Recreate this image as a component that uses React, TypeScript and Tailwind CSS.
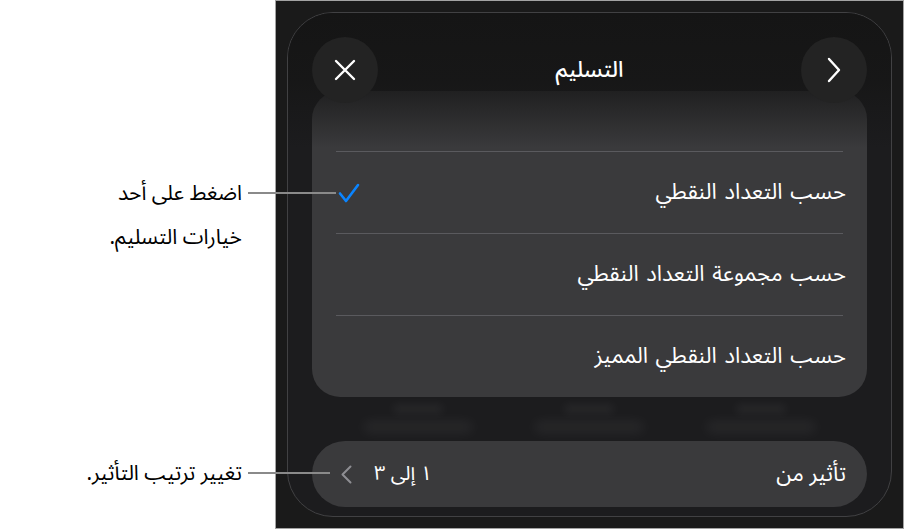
import React from "react";

const font = { fontFamily: '"Noto Sans Arabic", "DejaVu Sans", "Noto Sans", sans-serif' };

function XIcon() {
  return (
    <svg width="24" height="24" viewBox="0 0 24 24" fill="none" stroke="white" strokeWidth="2.4" strokeLinecap="round">
      <path d="M3 3 L21 21 M21 3 L3 21" />
    </svg>
  );
}

function ChevronRight() {
  return (
    <svg width="14" height="26" viewBox="0 0 14 26" fill="none" stroke="white" strokeWidth="2.4" strokeLinecap="round" strokeLinejoin="round">
      <path d="M2 2 L12 13 L2 24" />
    </svg>
  );
}

function ChevronLeft() {
  return (
    <svg width="11" height="19" viewBox="0 0 11 19" fill="none" stroke="#8e8e93" strokeWidth="2" strokeLinecap="round" strokeLinejoin="round">
      <path d="M9.5 1.5 L1.5 9.5 L9.5 17.5" />
    </svg>
  );
}

function Check() {
  return (
    <svg width="22" height="20" viewBox="0 0 22 20" fill="none" stroke="#0a84ff" strokeWidth="2.6" strokeLinecap="round" strokeLinejoin="round">
      <path d="M2 10.5 L8 18 L20 2" />
    </svg>
  );
}

export default function App() {
  const rows = ["حسب التعداد النقطي", "حسب مجموعة التعداد النقطي", "حسب التعداد النقطي المميز"];
  return (
    <div className="relative w-[904px] h-[529px] flex bg-white overflow-hidden" style={font}>
      {/* callouts */}
      <div className="w-[275px] shrink-0 flex flex-col items-end pr-[33px] pt-[171px] text-black text-[21px] leading-[44px]">
        <div className="text-right" dir="rtl">
          <div>اضغط على أحد</div>
          <div>خيارات التسليم.</div>
        </div>
        <div className="mt-[192px] text-right" dir="rtl">تغيير ترتيب التأثير.</div>
      </div>

      {/* dark panel */}
      <div className="w-[629px] h-[529px] shrink-0 bg-[#1a1a1a] border border-[#a3a3a3] p-[11px]">
        <div className="relative h-full rounded-[46px] border border-[#414143] bg-[#1c1c1e] px-[24px] pt-[24px] flex flex-col overflow-hidden">
          {/* top fade */}
          <div className="absolute left-0 right-0 top-0 h-[135px] bg-gradient-to-b from-[#151515] via-[#161616]/85 to-transparent z-[5] pointer-events-none" />

          {/* header */}
          <div className="relative z-10 h-[66px] flex items-center justify-between">
            <div className="w-[66px] h-[66px] rounded-full bg-[#232323] flex items-center justify-center">
              <XIcon />
            </div>
            <div className="text-white text-[22px] font-medium" dir="rtl">التسليم</div>
            <div className="w-[66px] h-[66px] rounded-full bg-[#232323] flex items-center justify-center">
              <ChevronRight />
            </div>
          </div>

          {/* option card */}
          <div className="-mt-[12px] rounded-[28px] bg-[#3a3a3c] px-[21px]" dir="rtl">
            <div className="h-[60px]" />
            {rows.map((r, i) => (
              <div key={r} className="h-[82px] flex flex-col">
                <div className="h-px bg-[#5a5a5e] mx-[3px]" />
                <div className="flex-1 flex items-center justify-between text-white text-[22px] [word-spacing:2px]">
                  <span>{r}</span>
                  {i === 0 ? <span className="ml-[5px]"><Check /></span> : null}
                </div>
              </div>
            ))}
          </div>

          {/* faint blurred content */}
          <div className="h-[44px] flex flex-col justify-center gap-[8px] px-[20px]">
            <div className="flex justify-around">
              <div className="w-[50px] h-[8px] rounded-full bg-white/[0.06] blur-[5px]" />
              <div className="w-[50px] h-[8px] rounded-full bg-white/[0.06] blur-[5px]" />
              <div className="w-[50px] h-[8px] rounded-full bg-white/[0.06] blur-[5px]" />
            </div>
            <div className="flex justify-around">
              <div className="w-[110px] h-[12px] rounded-full bg-white/[0.05] blur-[6px]" />
              <div className="w-[110px] h-[12px] rounded-full bg-white/[0.05] blur-[6px]" />
              <div className="w-[110px] h-[12px] rounded-full bg-white/[0.05] blur-[6px]" />
            </div>
          </div>

          {/* bottom pill */}
          <div className="h-[66px] rounded-full bg-[#3a3a3c] flex items-center justify-between pr-[21px] pl-[29px]" dir="rtl">
            <span className="text-white text-[22px]">تأثير من</span>
            <div className="flex items-center gap-[22px]">
              <span className="text-white text-[20px]">١ إلى ٣</span>
              <ChevronLeft />
            </div>
          </div>
        </div>
      </div>

      {/* leader lines */}
      <div className="absolute left-[248px] top-[192px] w-[88px] h-[2px] bg-[#8a8a8a]" />
      <div className="absolute left-[248px] top-[472px] w-[82px] h-[2px] bg-[#8a8a8a]" />
    </div>
  );
}
